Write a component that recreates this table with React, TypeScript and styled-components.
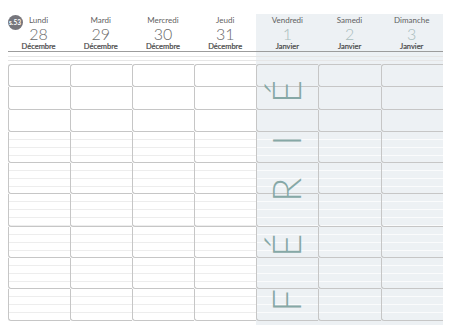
import styled, { createGlobalStyle } from 'styled-components';

const GlobalStyle = createGlobalStyle`
  body {
    margin: 0;
    background: #ffffff;
    font-family: Lato, "Noto Sans", sans-serif;
  }
`;

const days = [
  { name: 'Lundi', num: '28', month: 'Décembre' },
  { name: 'Mardi', num: '29', month: 'Décembre' },
  { name: 'Mercredi', num: '30', month: 'Décembre' },
  { name: 'Jeudi', num: '31', month: 'Décembre' },
  { name: 'Vendredi', num: '1', month: 'Janvier', off: true, holiday: true },
  { name: 'Samedi', num: '2', month: 'Janvier', off: true },
  { name: 'Dimanche', num: '3', month: 'Janvier', off: true },
];

// row heights: three plain slots, then six ruled slots
const rows = [
  { h: 23, lined: false },
  { h: 23, lined: false },
  { h: 22, lined: false },
  { h: 31, lined: true },
  { h: 31, lined: true },
  { h: 33, lined: true },
  { h: 31, lined: true },
  { h: 31, lined: true },
  { h: 32, lined: true },
];

export default function App() {
  return (
    <>
      <GlobalStyle />
      <Planner>
        {days.map((d, i) => (
          <DayColumn key={d.name} $off={!!d.off}>
            <DayHead>
              {i === 0 && <WeekBadge>s.53</WeekBadge>}
              <DayName>{d.name}</DayName>
              <DayNum $off={!!d.off}>{d.num}</DayNum>
              <Month>{d.month}</Month>
            </DayHead>
            <Spacer />
            <Slots>
              {rows.map((r, j) => (
                <Slot key={j} $first={j === 0} $lined={r.lined} $off={!!d.off} style={{ height: r.h }} />
              ))}
            </Slots>
            {d.holiday && (
              <HolidayWrap>
                <Holiday>FÉRIÉ</Holiday>
              </HolidayWrap>
            )}
          </DayColumn>
        ))}
      </Planner>
    </>
  );
}

const Planner = styled('div')`
  display: grid;
  grid-template-columns: repeat(7, 62.2px);
  padding: 14px 0 0 7.5px;
  width: 436px;
`;

const DayColumn = styled('div')<{ $off: boolean }>`
  position: relative;
  display: flex;
  flex-direction: column;
  background: ${(p) => (p.$off ? '#edf1f4' : 'transparent')};
  padding-bottom: 4px;
`;

const DayHead = styled('div')`
  position: relative;
  display: flex;
  flex-direction: column;
  align-items: center;
  height: 35px;
  padding-top: 2px;
  border-bottom: 1px solid #9c9c9c;
  color: #5f5f5f;
`;

const WeekBadge = styled('div')`
  position: absolute;
  left: 0;
  top: 1px;
  width: 15px;
  height: 15px;
  border-radius: 50%;
  background: #76767c;
  color: #ffffff;
  font-size: 6.5px;
  font-weight: 700;
  display: flex;
  align-items: center;
  justify-content: center;
`;

const DayName = styled('div')`
  font-size: 8px;
  line-height: 9px;
`;

const DayNum = styled('div')<{ $off: boolean }>`
  font-size: 16px;
  font-weight: 300;
  line-height: 17px;
  color: ${(p) => (p.$off ? '#a9bdbd' : '#6a6a6a')};
`;

const Month = styled('div')`
  font-size: 7.5px;
  line-height: 9px;
  color: #474747;
  -webkit-text-stroke: 0.2px #474747;
`;

const Spacer = styled('div')`
  height: 12px;
  background:
    linear-gradient(#e6e6e6, #e6e6e6) 0 4px / 100% 1px no-repeat,
    linear-gradient(#e6e6e6, #e6e6e6) 0 8px / 100% 1px no-repeat;
`;

const Slots = styled('div')`
  display: flex;
  flex-direction: column;
`;

const Slot = styled('div')<{ $first: boolean; $lined: boolean; $off: boolean }>`
  box-sizing: border-box;
  border-left: 1.5px solid #c6c6c6;
  border-bottom: 1.5px solid #c6c6c6;
  border-top: ${(p) => (p.$first ? '1.5px solid #c6c6c6' : 'none')};
  border-radius: ${(p) => (p.$first ? '3px 0 0 3px' : '0 0 0 3px')};
  background: ${(p) =>
    p.$lined
      ? `repeating-linear-gradient(to bottom, transparent 0 7px, ${p.$off ? '#fafbfc' : '#ededed'} 7px 8px)`
      : 'transparent'};
`;

const HolidayWrap = styled('div')`
  position: absolute;
  left: 0;
  right: 0;
  top: 60px;
  bottom: 12px;
  display: flex;
  justify-content: center;
  align-items: center;
  pointer-events: none;
`;

const Holiday = styled('div')`
  writing-mode: vertical-rl;
  transform: translateX(-1px) rotate(180deg);
  font-size: 40px;
  font-weight: 300;
  line-height: 1;
  letter-spacing: 32px;
  color: #86a8a6;
  margin-top: -27px;
`;
